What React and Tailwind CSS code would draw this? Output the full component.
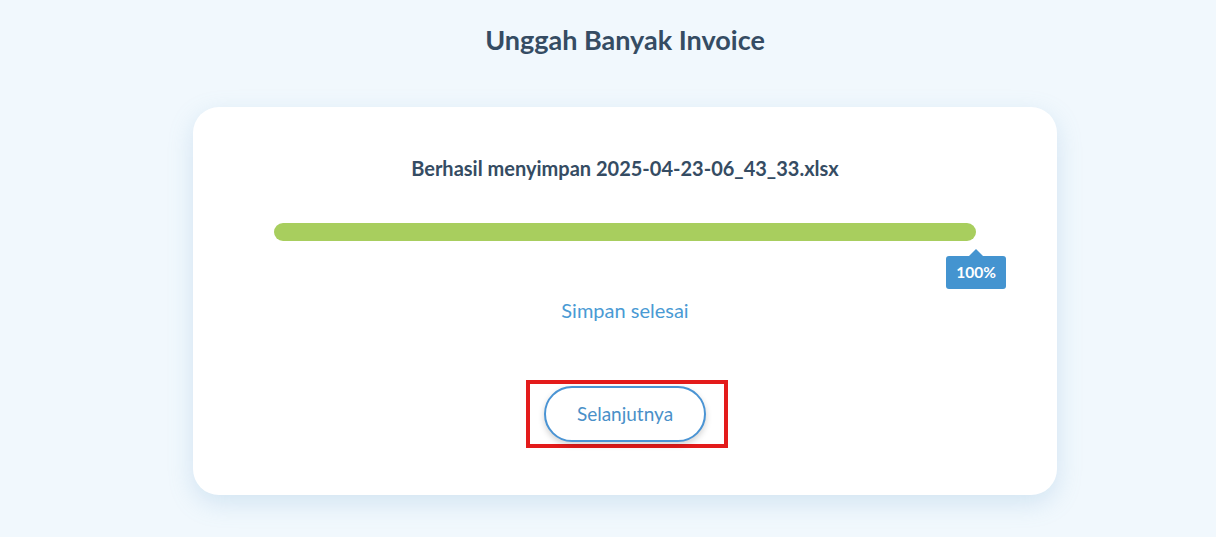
export default function App() {
  return (
    <div className="min-h-[537px] bg-[#f1f8fd] font-['Lato',sans-serif] pl-[34px]">
      <div className="flex flex-col items-center pt-[22px]">
        <h1 className="text-[27px] leading-[35px] font-bold text-[#354c63]">Unggah Banyak Invoice</h1>

        <div className="mt-[50px] w-[864px] h-[388px] bg-white rounded-[26px] shadow-[0_8px_24px_rgba(120,170,210,0.25)] px-[81px] pt-[48px] flex flex-col items-center">
          <p className="text-[20px] leading-[26px] font-bold text-[#354c63]">
            Berhasil menyimpan 2025-04-23-06_43_33.xlsx
          </p>

          <div className="relative mt-[42px] w-full h-[18px] rounded-full bg-[#a8ce5e]">
            <div className="absolute right-[-30px] top-[26px] flex flex-col items-center">
              <div className="w-0 h-0 border-x-[7px] border-x-transparent border-b-[7px] border-b-[#4494d0]"></div>
              <div className="w-[60px] h-[33px] rounded-[3px] bg-[#4494d0] flex items-center justify-center text-white text-[15.5px] font-bold">
                100%
              </div>
            </div>
          </div>

          <p className="mt-[56px] text-[20px] leading-[27px] text-[#4a9ad4]">Simpan selesai</p>

          <div className="mt-[56px] ml-[4px] border-4 border-[#e31b1b] pl-[14px] pr-[18px] py-[2px]">
            <button className="w-[162px] h-[56px] rounded-full border-2 border-[#4a94d4] bg-white shadow-[0_3px_6px_rgba(0,0,0,0.18)] text-[19px] text-[#4a90c8]">
              Selanjutnya
            </button>
          </div>
        </div>
      </div>
    </div>
  );
}
